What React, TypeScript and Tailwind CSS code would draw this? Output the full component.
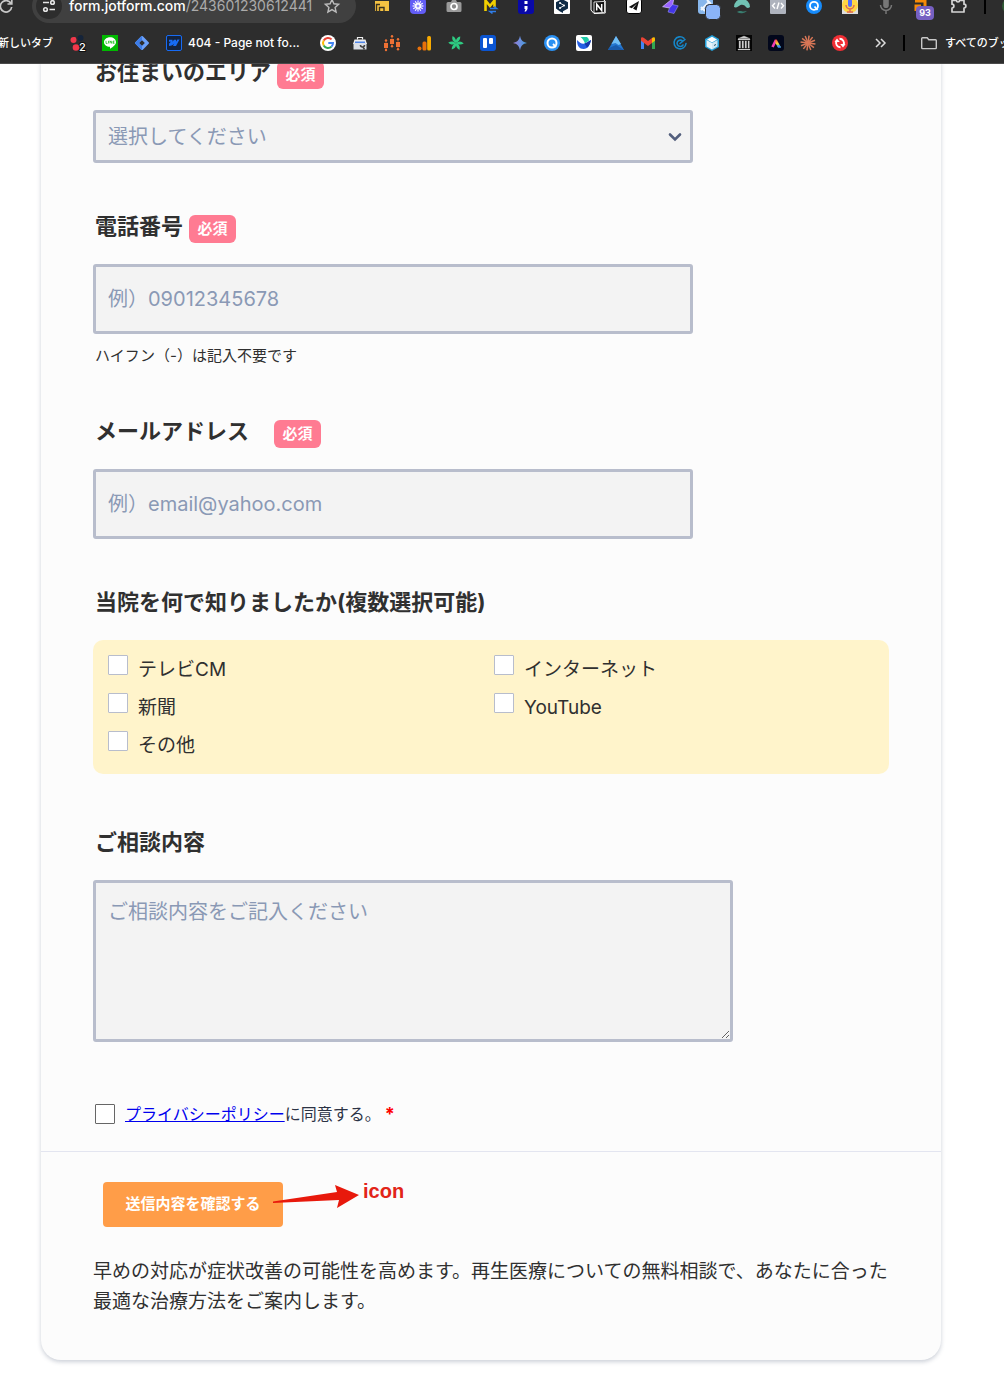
import React from "react";

type IconProps = { children: React.ReactNode; label: string };

function Glyph({ children, label }: IconProps) {
  return (
    <button type="button" aria-label={label} className="block size-4 shrink-0">
      <svg viewBox="0 0 16 16" className="block size-4 overflow-visible">
        {children}
      </svg>
    </button>
  );
}

const rays = (count: number) => Array.from({ length: count }, (_, i) => (360 / count) * i);

function Extensions() {
  return (
    <div className="flex shrink-0 items-center gap-5">
      <Glyph label="Screen cast">
        <path d="M1 3h14v10H1z" fill="#f5c242" />
        <path d="M2.500 13V6.500H6M5.500 13v-3.500h4.500V13" stroke="#3b3320" strokeWidth="1.400" fill="none" />
      </Glyph>
      <Glyph label="Loom">
        <rect width="16" height="16" rx="4" fill="#625df5" />
        {rays(12).map((a) => (
          <path key={a} d="M8 5.500V2.500" stroke="#fff" strokeWidth="1.100" transform={`rotate(${a} 8 8)`} />
        ))}
        <circle cx="8" cy="8" r="3" fill="#fff" />
        <circle cx="8" cy="8" r="1.500" fill="#8f8bfa" />
      </Glyph>
      <Glyph label="Camera">
        <path d="M2 4h3l1-2h4l1 2h3a1.500 1.500 0 0 1 1.500 1.500v7A1.500 1.500 0 0 1 14 14H2a1.500 1.500 0 0 1-1.500-1.500v-7A1.500 1.500 0 0 1 2 4z" fill="#9a9a9a" />
        <circle cx="8" cy="8.500" r="3" stroke="#fff" strokeWidth="1.700" fill="#888" />
      </Glyph>
      <Glyph label="Mail tracker">
        <path d="M3.500 13V2.500L8 8l4.500-5.500V9" stroke="#f2d000" strokeWidth="2.600" fill="none" />
        <path d="M8 10.500h6.500L12 8.500M14 13.500H8l2.500 2" stroke="#2f7de8" strokeWidth="1.600" fill="none" />
      </Glyph>
      <Glyph label="Semicolon">
        <rect width="16" height="16" rx="3" fill="#0909a8" />
        <rect x="6.500" y="3" width="3" height="3" fill="#fff" />
        <path d="M6.500 8h3v3l-1.500 2.500H6.500L7.500 11h-1z" fill="#fff" />
      </Glyph>
      <Glyph label="Translator">
        <rect width="16" height="16" rx="1" fill="#fff" />
        <path d="M8 1l6 3.200v6.300L9 13.200V15l-3-1.600-4-2.900V4.200z" fill="#0f2b46" />
        <path d="M6 5l4 2.500L6 10" stroke="#fff" strokeWidth=".900" fill="none" />
        <circle cx="6" cy="5" r="1" fill="#fff" />
        <circle cx="10" cy="7.500" r="1" fill="#fff" />
        <circle cx="6" cy="10" r="1" fill="#fff" />
      </Glyph>
      <Glyph label="Notion">
        <path d="M1 1.500L12.500.8 15.200 3v12L4 15.500 1 12z" fill="#222" stroke="#fff" strokeWidth="1" />
        <path d="M4 4l10.500-.6v11L4 15z" fill="#111" stroke="#fff" strokeWidth=".800" />
        <path d="M6.700 12.500V6.200l5 6.300V6" stroke="#fff" strokeWidth="1.500" fill="none" />
      </Glyph>
      <Glyph label="Send">
        <rect x=".500" y=".500" width="15" height="15" rx="2.500" fill="#fff" stroke="#000" />
        <path d="M13 3L2.800 9l3 1.200L11 5.500l-4 5 3.500 2z" fill="#111" />
      </Glyph>
      <Glyph label="Bolt">
        <path d="M12-.5L.600 8.700 7.500 10l3.200-3.500z" fill="#9a63ff" stroke="#d9c8ff" strokeWidth=".700" />
        <path d="M10.500 6.500l5.700 1.300-4.200 7.700-6-1.500L7.500 10z" fill="#4335e8" stroke="#a9a4ff" strokeWidth=".500" />
      </Glyph>
      <Glyph label="Tools">
        <rect width="15" height="16" rx="3" fill="#88b7ec" />
        <path d="M3 12L11 4M9 2l4 4M3 9l4 4" stroke="#eef6ff" strokeWidth="2" />
        <rect x="7.500" y="6.500" width="15" height="15" rx="4" fill="#8ab4f8" stroke="#2d2d2d" strokeWidth="1" />
      </Glyph>
      <Glyph label="Wave">
        <path d="M0 9a8 8 0 0 1 16 0c-2 1.500-3.500 1-4.500-.5S8.500 6.200 6.500 7C4.500 8 2.500 10.500 0 9z" fill="#71c3b4" />
        <path d="M3 14c2-1.500 4-1 5-.7s3 .2 5-.3a8 8 0 0 1-10 1z" fill="#397e70" />
      </Glyph>
      <Glyph label="Code">
        <rect width="16" height="16" rx="1" fill="#aeb3bd" />
        <path d="M5 5L2.500 7.800 5 10.500M11 5l2.500 2.800-2.500 2.700M9 4.500L7 11" stroke="#fff" strokeWidth="1.400" fill="none" />
      </Glyph>
      <Glyph label="Q search">
        <circle cx="8" cy="8" r="8" fill="#168bfb" />
        <circle cx="8" cy="7.800" r="4" stroke="#fff" strokeWidth="1.800" fill="none" />
        <path d="M8.500 8.500l3 3.500" stroke="#fff" strokeWidth="1.800" />
      </Glyph>
      <Glyph label="Voice">
        <path d="M0 0h16v16H0z" fill="#ddd" />
        <circle cx="8" cy="7" r="8" fill="#ffd642" />
        <rect x="6" y="1" width="4" height="8" rx="2" fill="#536dfe" />
        <path d="M4 7a4 4 0 0 0 8 0M8 11v2.500M5 14h6" stroke="#dd6857" strokeWidth="1.500" fill="none" />
      </Glyph>
      <Glyph label="Microphone">
        <rect x="5.200" y="-1" width="5.600" height="11" rx="2.800" fill="#777" />
        <path d="M2.500 7a5.500 5.500 0 0 0 11 0M8 12.500V16" stroke="#777" strokeWidth="1.500" fill="none" />
      </Glyph>
      <div className="relative">
        <Glyph label="Notifications">
          <path d="M1 3h10v8M2 13V8h5" stroke="#f58a07" strokeWidth="3" fill="none" />
        </Glyph>
        <span className="absolute left-0.5 top-2 flex h-3.5 w-[18px] items-center justify-center rounded bg-[#7660c2] text-[9px] font-bold text-white">93</span>
      </div>
      <Glyph label="Extensions">
        <path d="M2 2.500h4.500a1.500 1.500 0 0 0 3 0H14v3.700a1.900 1.900 0 0 1 0 3.800v4H2v-4a1.900 1.900 0 0 0 0-3.800z" stroke="#d5d5d5" strokeWidth="1.700" fill="none" strokeLinejoin="round" />
      </Glyph>
    </div>
  );
}

function BookmarkIcons() {
  return (
    <div className="flex shrink-0 items-center gap-4">
      <Glyph label="Google">
        <circle cx="8" cy="8" r="8" fill="#fff" />
        <path d="M11.600 4.400A5 5 0 0 0 3.700 5.500" stroke="#ea4335" strokeWidth="2" fill="none" />
        <path d="M3.700 5.500a5 5 0 0 0 0 5" stroke="#fbbc05" strokeWidth="2" fill="none" />
        <path d="M3.700 10.500a5 5 0 0 0 7.800 1.100" stroke="#34a853" strokeWidth="2" fill="none" />
        <path d="M11.500 11.600A5 5 0 0 0 13 8H8.300" stroke="#4285f4" strokeWidth="2" fill="none" />
      </Glyph>
      <Glyph label="Business profile">
        <path d="M5.500 4.500V2.500h5v2" stroke="#eee" strokeWidth="1.200" fill="none" />
        <path d="M2.500 4.500h11L15 9H1z" fill="#ececec" />
        <path d="M1.500 8h13v6.500h-13z" fill="#d9dee5" />
        <path d="M3 6.500h10V8H3z" fill="#4f86e8" />
        <path d="M8.500 10a2 2 0 1 0 4 0M11 12l1.500 2.500" stroke="#444" strokeWidth="1.600" fill="none" />
      </Glyph>
      <Glyph label="Charts">
        <path d="M2 5v10M8 1v11M14 4v11" stroke="#a84f22" strokeWidth=".800" />
        <path d="M0 8h4v5H0zM6 4h4v5H6zM12 7h4v5h-4z" fill="#ef7134" />
        <circle cx="2" cy="5.500" r="1.200" fill="#ef7134" />
        <circle cx="8" cy="1.300" r="1.200" fill="#ef7134" />
        <circle cx="8" cy="11.300" r="1.200" fill="#ef7134" />
        <circle cx="14" cy="4.300" r="1.200" fill="#ef7134" />
        <circle cx="2" cy="15" r="1.200" fill="#ef7134" />
        <circle cx="14" cy="14.300" r="1.200" fill="#ef7134" />
      </Glyph>
      <Glyph label="Analytics">
        <circle cx="3.500" cy="13.500" r="2" fill="#e8710a" />
        <rect x="6.500" y="6.500" width="4" height="9" rx="1.500" fill="#e8710a" />
        <rect x="11.200" y="1" width="3.800" height="14.500" rx="1.500" fill="#f9ab00" />
      </Glyph>
      <Glyph label="Leaf">
        {rays(6).map((a) => (
          <path key={a} d="M8 8C5.800 5.500 6 2.500 8.500.3 10.200 3 9.800 5.800 8 8z" fill="#2ecb82" transform={`rotate(${a + 30} 8 8)`} />
        ))}
      </Glyph>
      <Glyph label="Trello">
        <rect width="16" height="16" rx="3" fill="#0b55d2" />
        <rect x="3" y="3" width="4" height="10" rx="1" fill="#fff" />
        <rect x="9" y="3" width="4" height="6" rx="1" fill="#fff" />
      </Glyph>
      <Glyph label="Gemini">
        <defs>
          <linearGradient id="spark" x1="0" y1="0.500" x2="1" y2="0.500">
            <stop offset="0" stopColor="#9a7bd0" />
            <stop offset="0.500" stopColor="#6d8fe0" />
            <stop offset="1" stopColor="#3d9bd9" />
          </linearGradient>
        </defs>
        <path d="M8 .8C8.900 5.300 10.700 7.100 15 8c-4.300.9-6.100 2.700-7 7.200C7.100 10.700 5.300 8.900 1 8c4.300-.9 6.100-2.700 7-7.200z" fill="url(#spark)" />
      </Glyph>
      <Glyph label="Q">
        <circle cx="8" cy="8" r="8" fill="#2b91f3" />
        <circle cx="8" cy="8" r="4.500" stroke="#fff" strokeWidth="2" fill="none" />
        <path d="M9 9l3 3" stroke="#fff" strokeWidth="1.800" />
      </Glyph>
      <Glyph label="Bird">
        <rect width="16" height="16" rx="2" fill="#fff" />
        <path d="M4.500 2H11c1.500 1.200 2 2.500 2 3.500L9 8.500C8 5.500 6.500 3.500 4.500 2z" fill="#20cba8" />
        <path d="M1 5c3 3.500 6 4.500 9 3l5-3c-1 5-3 9-7.500 9-4 0-6.500-3-6.500-9z" fill="#245fe4" />
        <path d="M8.500 8.500c2-.5 4-2 6.500-3.500-1 4-2 6-4 7.500z" fill="#1437a7" />
      </Glyph>
      <Glyph label="Pyramid">
        <path d="M8 1L0 15h16z" fill="#2476cf" />
        <path d="M8 1L3.500 9l4-1 3 2 2.500-1z" fill="#70bdf5" />
        <path d="M1 13l7-3 8 5H0z" fill="#195bad" />
      </Glyph>
      <Glyph label="Gmail">
        <path d="M1 4v10h3V6z" fill="#4285f4" />
        <path d="M12 6v8h3V4z" fill="#34a853" />
        <path d="M12 3v5l3-2.300V3.500C15 2 13.300 1.800 12 3z" fill="#fbbc04" />
        <path d="M1 3.500C1 2 2.700 1.800 4 3l4 3 4-3v5l-4 3-4-3-3-2.300z" fill="#ea4335" />
      </Glyph>
      <Glyph label="Spiral">
        <path d="M12 3.300A6 6 0 1 0 14 8.500M10.500 6a3.200 3.200 0 1 0 .5 4M8 8.500l5-4" stroke="#1686c8" strokeWidth="1.600" fill="none" strokeLinecap="round" />
      </Glyph>
      <Glyph label="Box">
        <path d="M8 0l7 4v8l-7 4-7-4V4z" fill="#239fd8" />
        <path d="M8 1.800l5 2.700-5 2.900-5-2.900z" fill="#fff" />
        <path d="M2.500 5L8 8v6.500l-5.500-3z" fill="#e4f3fa" />
        <path d="M13.500 5L8 8v6.500l5.500-3z" fill="#cfe6f2" />
        <path d="M10 10.500l2-1" stroke="#27546a" />
      </Glyph>
      <Glyph label="Archive">
        <path d="M0 0h16v16H0z" fill="#050505" />
        <path d="M8 1l6 2.500H2zM2 4h12v1H2zM2 14h12v1H2zM3 6h1.500v7H3zM6 6h1.500v7H6zM9 6h1.500v7H9zM12 6h1.300v7H12z" fill="#ccc" stroke="#ccc" strokeWidth=".300" />
      </Glyph>
      <Glyph label="Prism">
        <defs>
          <linearGradient id="prism" x1="0.500" y1="0" x2="0.500" y2="1">
            <stop offset="0" stopColor="#ff4a30" />
            <stop offset="0.500" stopColor="#f5d33a" />
            <stop offset="1" stopColor="#3ecf8e" />
          </linearGradient>
        </defs>
        <rect width="16" height="16" rx="3" fill="#02071b" />
        <path d="M4.500 12L8 5" stroke="#f03bb0" strokeWidth="2.600" fill="none" />
        <path d="M7.300 4.500h1.400L13 12.500h-3L7.300 8z" fill="url(#prism)" />
        <path d="M10 12.500h3l-1.200-2.200H9z" fill="#4184ff" />
      </Glyph>
      <Glyph label="Claude">
        {rays(12).map((a) => (
          <path key={a} d="M8 8V.500" stroke="#d97757" strokeWidth="1.500" transform={`rotate(${a + 8} 8 8)`} />
        ))}
      </Glyph>
      <Glyph label="Sync">
        <circle cx="8" cy="8" r="8" fill="#f12f35" />
        <path d="M8.500 12.200A4.300 4.300 0 0 1 4.500 6M7.500 3.800A4.300 4.300 0 0 1 11.500 10" stroke="#fff" strokeWidth="1.900" fill="none" />
        <path d="M2.500 7L5 3.500 7.800 7zM13.500 9L11 12.500 8.200 9z" fill="#fff" />
      </Glyph>
    </div>
  );
}

function BrowserBar() {
  return (
    <header className="relative z-10 h-16 overflow-hidden border-b border-[#4a4a4a] bg-[#2d2d2d] text-white">
      <div className="-mt-3 flex h-9 w-max items-center">
        <button type="button" aria-label="Reload" className="w-8 shrink-0">
          <svg viewBox="0 0 16 16" className="-ml-0.5 size-4" fill="none" stroke="#c7c7c7" strokeWidth="1.700">
            <path d="M13 5.500A5.700 5.700 0 1 0 13.700 9M13.800 1.500V6H9.500" />
          </svg>
        </button>
        <div className="flex h-[34px] w-[324px] shrink-0 items-center rounded-full bg-[#404040] pl-1 pr-4">
          <button type="button" aria-label="Site settings" className="flex size-[26px] shrink-0 items-center justify-center rounded-full bg-[#2d2d2d]">
            <svg viewBox="0 0 16 16" className="size-4" fill="none" stroke="#e6e6e6" strokeWidth="1.600">
              <path d="M2 4.500h6M8.500 11.500h5.500" />
              <circle cx="11.500" cy="4.500" r="1.800" />
              <circle cx="4.500" cy="11.500" r="1.800" />
            </svg>
          </button>
          <span className="ml-[7px] flex-1 whitespace-nowrap text-sm font-medium leading-4">
            form.jotform.com<span className="font-normal text-[#ababab]">/243601230612441</span>
          </span>
          <Glyph label="Bookmark this page">
            <path d="M8 1.500l1.900 4.300 4.700.5-3.500 3.100 1 4.600L8 11.600 3.900 14l1-4.600L1.400 6.300l4.700-.5z" fill="none" stroke="#bdbdbd" strokeWidth="1.400" />
          </Glyph>
        </div>
        <div className="ml-[18px] flex items-center">
          <Extensions />
          <span className="ml-[18px] h-4 w-0.5 bg-black" />
          <span className="ml-4 size-4 rounded-full bg-[#315b36]" />
        </div>
      </div>
      <nav className="flex h-[38px] w-max items-center text-xs font-medium">
        <a href="#tab" className="-ml-0.5 w-[72px] shrink-0 whitespace-nowrap text-[11px] text-white">新しいタブ</a>
        <div className="flex items-center gap-4">
          <Glyph label="Red bookmark">
            <circle cx="3.500" cy="5" r="3" fill="#f1384b" />
            <circle cx="4.500" cy="3.500" r="1.500" fill="#f1384b" />
            <circle cx="10.500" cy="3" r="3" fill="#15243a" />
            <circle cx="6" cy="12.500" r="3.300" fill="#f1384b" />
            <text x="12.500" y="15.500" fontSize="11" textAnchor="middle" fontWeight="500" fill="#fff" stroke="#111" strokeWidth="2" paintOrder="stroke">2</text>
          </Glyph>
          <Glyph label="LINE">
            <path d="M0 0h16v16H0z" fill="#00b900" />
            <path d="M8 2.300c3.400 0 6 2.100 6 4.900 0 2.200-2.500 4.500-6 6.600v-2c-3.400 0-6-2-6-4.600S4.600 2.300 8 2.300z" fill="#fff" />
            <path d="M4 5.800v2.600h1.500M6.500 5.800v2.600M8 8.400V5.800l1.700 2.600V5.800M12.500 6h-1.300v2.400h1.300M11.200 7.200h1.200" stroke="#00b900" strokeWidth=".700" fill="none" />
          </Glyph>
          <Glyph label="Diamond">
            <rect x="2.700" y="2.700" width="10.600" height="10.600" rx="1.200" transform="rotate(45 8 8)" fill="#6aa0fa" />
            <path d="M.800 8L8 .8V5L5 8l3 3v4.200z" fill="#3d7ce6" />
            <rect x="6" y="6" width="4" height="4" transform="rotate(45 8 8)" fill="#2d2d2d" />
          </Glyph>
          <a href="#not-found" className="flex w-[146px] items-center whitespace-nowrap">
            <svg viewBox="0 0 16 16" className="mr-1.5 size-4 shrink-0">
              <rect x=".500" y=".500" width="15" height="15" rx="1.500" fill="#14233e" stroke="#176bf4" />
              <path d="M13.500 4.500L10 11H7l1.300-2.500C7.200 10 5.500 11 3 11V8.500l2-1.700H3V4.800h3.500v2L8 4.800h2v2l1.400-2.300z" fill="#176bf4" />
            </svg>
            404 - Page not fo...
          </a>
        </div>
        <div className="ml-2">
          <BookmarkIcons />
        </div>
        <button type="button" aria-label="More bookmarks" className="ml-6 size-4">
          <svg viewBox="0 0 16 16" className="size-4" fill="none" stroke="#ddd" strokeWidth="1.500">
            <path d="M4 4l4 4-4 4M9 4l4 4-4 4" />
          </svg>
        </button>
        <span className="ml-[15px] h-4 w-0.5 bg-black" />
        <a href="#all" className="ml-4 flex items-center gap-2 whitespace-nowrap text-[11px]">
          <svg viewBox="0 0 16 16" className="size-4" fill="none" stroke="#c9c9c9" strokeWidth="1.400">
            <path d="M1.500 2.700h4.700l1.600 2h6.700a.800.800 0 0 1 .8.800v7.300a.800.800 0 0 1-.8.800h-13a.800.800 0 0 1-.8-.8V3.500a.800.800 0 0 1 .8-.8z" />
          </svg>
          すべてのブックマーク
        </a>
      </nav>
    </header>
  );
}

function Heading({ id, children, required, wide }: { id: string; children: string; required?: boolean; wide?: boolean }) {
  return (
    <div className="mb-[21px] flex h-7 items-start pl-0.5">
      <label htmlFor={id} className="text-[22px] font-bold leading-[22px] text-[#303030]">{children}</label>
      {required && (
        <span className={`${wide ? "ml-[25px]" : "ml-1.5"} flex h-7 w-[47px] items-center justify-center rounded-md bg-[#ff7b92] text-[15px] font-bold text-white`}>必須</span>
      )}
    </div>
  );
}

const fieldClass =
  "block w-full rounded-[3px] border-[3px] border-[#b8bdcc] bg-[#f3f3f3] px-3 text-xl text-[#8a99b5] placeholder:text-[#8a99b5] placeholder:opacity-100";

const sources = ["テレビCM", "インターネット", "新聞", "YouTube", "その他"];

export default function App() {
  return (
    <div className="min-h-screen bg-white pb-[22px] font-['Inter','Noto_Sans_CJK_JP',sans-serif]" lang="ja">
      <BrowserBar />
      <form
        onSubmit={(e) => e.preventDefault()}
        className="-mt-[3px] ml-[41px] mr-[63px] rounded-b-[20px] bg-[#fcfcfc] shadow-[0_2px_4px_rgba(87,100,126,0.3)]"
      >
        <div className="px-[52px] pb-[27px]">
          <div className="mb-[52px]">
            <Heading id="area" required>お住まいのエリア</Heading>
            <div className="relative max-w-[600px]">
              <select id="area" className={`${fieldClass} h-[53px] appearance-none`}>
                <option>選択してください</option>
              </select>
              <svg viewBox="0 0 16 16" className="pointer-events-none absolute right-2.5 top-[19px] size-4" fill="none" stroke="#535f7d" strokeWidth="2.600" strokeLinecap="round">
                <path d="M3 5.500l5 5 5-5" />
              </svg>
            </div>
          </div>
          <div className="mb-[52px] max-w-[600px]">
            <Heading id="phone" required>電話番号</Heading>
            <input id="phone" type="tel" placeholder="例）09012345678" className={`${fieldClass} h-[70px]`} />
            <p className="mt-2.5 pl-0.5 text-[15px] leading-6 text-[#303030]">ハイフン（-）は記入不要です</p>
          </div>
          <div className="mb-[52px] max-w-[600px]">
            <Heading id="email" required wide>メールアドレス</Heading>
            <input id="email" type="email" placeholder="例）email@yahoo.com" className={`${fieldClass} h-[70px]`} />
          </div>
          <div className="mb-[57px]">
            <Heading id="source-0">当院を何で知りましたか(複数選択可能)</Heading>
            <div className="grid grid-cols-2 gap-y-2 rounded-[10px] bg-[#fff4cb] pb-[13px] pl-[15px] pr-[9px] pt-[15px]">
              {sources.map((s, i) => (
                <div key={s} className="flex items-start gap-2.5">
                  <input id={`source-${i}`} type="checkbox" className="size-5 shrink-0 appearance-none rounded-[1px] border border-[#b8bdcc] bg-white checked:bg-[#535f7d]" />
                  <label htmlFor={`source-${i}`} className="text-[19px] leading-[30px] text-[#303030]">{s}</label>
                </div>
              ))}
            </div>
          </div>
          <div className="mb-[61px] max-w-[640px]">
            <Heading id="message">ご相談内容</Heading>
            <textarea id="message" placeholder="ご相談内容をご記入ください" className={`${fieldClass} h-[162px] py-[15px]`} />
          </div>
          <div className="flex h-[21px] items-center pl-0.5 text-base text-[#2c3345]">
            <input id="agree" type="checkbox" required className="mr-2.5 size-5 shrink-0 appearance-none rounded-[1px] border border-[#666] bg-white checked:bg-[#535f7d]" />
            <label htmlFor="agree">
              <a href="#privacy" className="text-[#0000ee] underline">プライバシーポリシー</a>に同意する。
            </label>
            <span className="ml-1 text-lg font-bold text-[#ff0000]">*</span>
          </div>
        </div>
        <div className="border-t border-[#e3e5f0] pb-[43px] pl-[52px] pr-12 pt-[30px]">
          <div className="relative mb-[30px] ml-2.5 w-max">
            <button type="submit" className="h-[45px] w-[180px] rounded bg-[#ff9d48] text-[15px] font-bold text-white">送信内容を確認する</button>
            <svg viewBox="0 0 88 26" className="pointer-events-none absolute left-[169px] top-0.5 h-[26px] w-[88px]">
              <path d="M1 17.500L65 8l-2-7 24 10-22 13 2-8-66 3z" fill="#e8190c" />
            </svg>
            <span className="absolute -top-[3px] left-[260px] font-['Liberation_Sans',sans-serif] text-xl font-bold leading-6 text-[#e22418]">icon</span>
          </div>
          <p className="text-[19px] leading-[30px] text-[#303030]">
            早めの対応が症状改善の可能性を高めます。再生医療についての無料相談で、あなたに合った
            最適な治療方法をご案内します。
          </p>
        </div>
      </form>
    </div>
  );
}
